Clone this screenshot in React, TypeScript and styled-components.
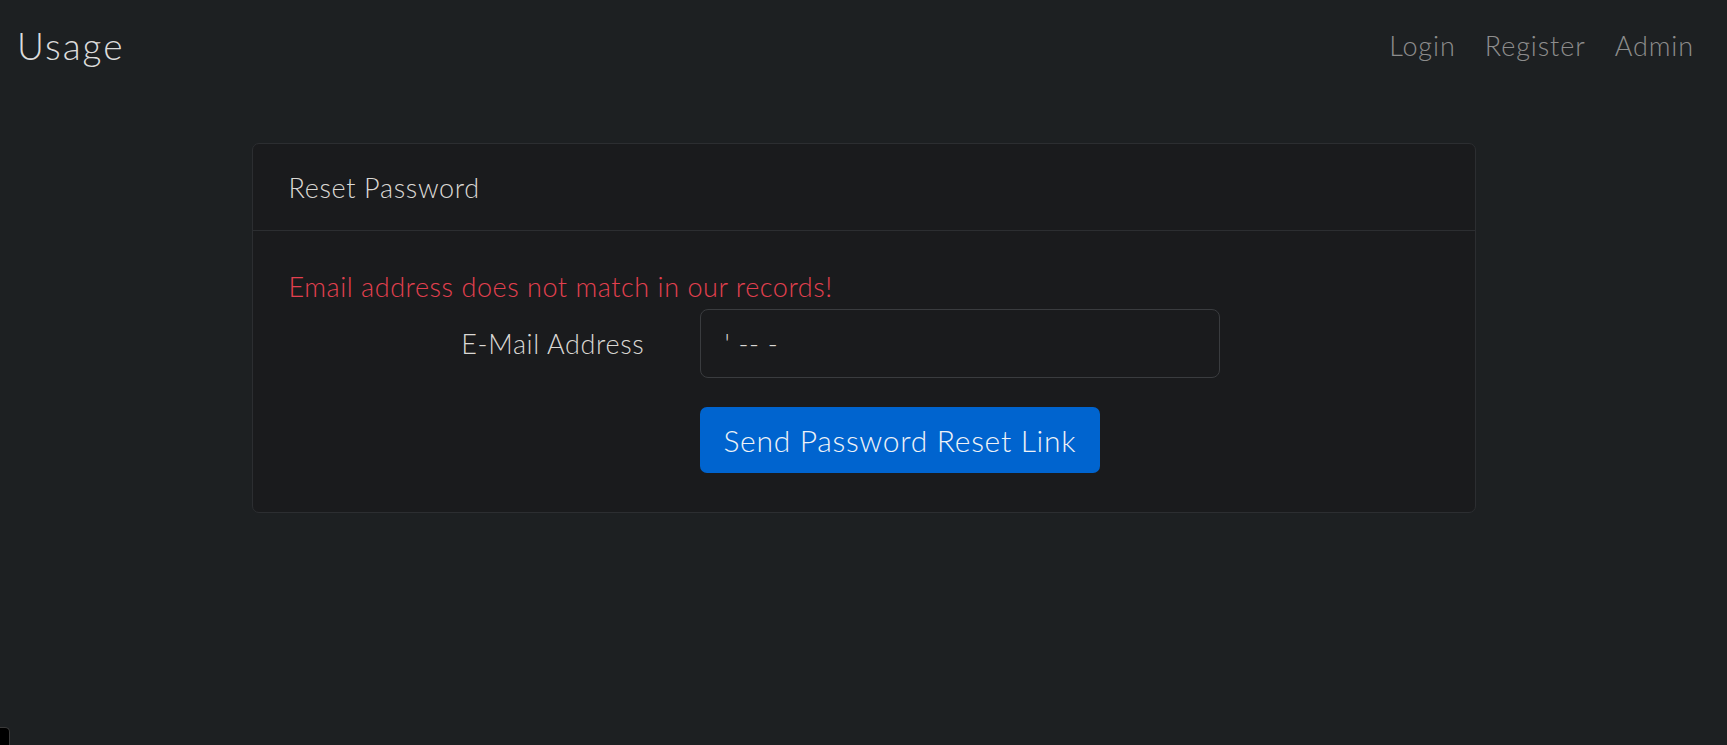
import styled, { createGlobalStyle } from "styled-components"

const colors = {
  page: "#1d2022",
  card: "#1a1b1d",
  border: "#2c2e31",
  text: "#dad8d4",
  muted: "#8d8d8d",
  danger: "#e3404f",
  primary: "#0064cf",
}

const font = `Lato, "Open Sans", "Liberation Sans", sans-serif`

const GlobalStyle = createGlobalStyle`
  html, body {
    margin: 0;
    padding: 0;
    background: ${colors.page};
    color: ${colors.text};
    font-family: ${font};
  }
  #root {
    min-height: 745px;
  }
`

const Navbar = styled.nav`
  height: 90px;
  display: flex;
  align-items: center;
  justify-content: space-between;
  padding: 0 33px 0 17px;
  box-sizing: border-box;
`

const Brand = styled.a`
  font-size: 37px;
  font-weight: 300;
  letter-spacing: 2px;
  color: #dcdcdc;
  text-decoration: none;
`

const NavLinks = styled.div`
  display: flex;
  gap: 29px;
`

const NavLink = styled.a`
  font-size: 27px;
  font-weight: 300;
  letter-spacing: 0.9px;
  color: ${colors.muted};
  text-decoration: none;
`

const Main = styled.main`
  padding-top: 53px;
  display: flex;
  justify-content: center;
`

const Card = styled.section`
  width: 1224px;
  box-sizing: border-box;
  background: ${colors.card};
  border: 1px solid ${colors.border};
  border-radius: 7px;
  letter-spacing: 0.65px;
`

const CardHeader = styled.header`
  height: 86px;
  display: flex;
  align-items: center;
  padding: 0 36px;
  border-bottom: 1px solid ${colors.border};
  font-size: 27px;
  font-weight: 300;
`

const CardBody = styled.div`
  padding: 39px 36px 39px;
  display: grid;
  grid-template-columns: 356px 520px;
  column-gap: 55px;
  row-gap: 29px;
  align-items: center;
`

const ErrorText = styled.div`
  grid-column: 1 / -1;
  color: ${colors.danger};
  font-size: 27px;
  font-weight: 300;
  letter-spacing: 0.55px;
  margin-bottom: -23px;
`

const Label = styled.label`
  text-align: right;
  font-size: 27px;
  font-weight: 300;
`

const Input = styled.input`
  height: 69px;
  box-sizing: border-box;
  padding: 0 24px;
  background: ${colors.card};
  border: 1px solid #3a3c3f;
  border-radius: 8px;
  color: ${colors.text};
  font-family: ${font};
  font-size: 27px;
  font-weight: 300;
  letter-spacing: 0.65px;
  outline: none;
`

const Button = styled.button`
  grid-column: 2;
  justify-self: start;
  height: 66px;
  padding: 0 24px;
  background: ${colors.primary};
  border: none;
  border-radius: 7px;
  color: #eef2f7;
  font-family: ${font};
  font-size: 30px;
  font-weight: 300;
  letter-spacing: 0.7px;
`

const CornerTab = styled.div`
  position: fixed;
  left: 0;
  bottom: 0;
  width: 10px;
  height: 18px;
  box-sizing: border-box;
  background: #000;
  border-top: 1px solid #3a3a3a;
  border-right: 1px solid #3a3a3a;
  border-top-right-radius: 5px;
`

export default function App() {
  return (
    <>
      <GlobalStyle />
      <Navbar>
        <Brand href="#">Usage</Brand>
        <NavLinks>
          <NavLink href="#">Login</NavLink>
          <NavLink href="#">Register</NavLink>
          <NavLink href="#">Admin</NavLink>
        </NavLinks>
      </Navbar>
      <Main>
        <Card>
          <CardHeader>Reset Password</CardHeader>
          <CardBody>
            <ErrorText>Email address does not match in our records!</ErrorText>
            <Label htmlFor="email">E-Mail Address</Label>
            <Input id="email" type="email" defaultValue="' -- -" />
            <Button type="submit">Send Password Reset Link</Button>
          </CardBody>
        </Card>
      </Main>
      <CornerTab />
    </>
  )
}
